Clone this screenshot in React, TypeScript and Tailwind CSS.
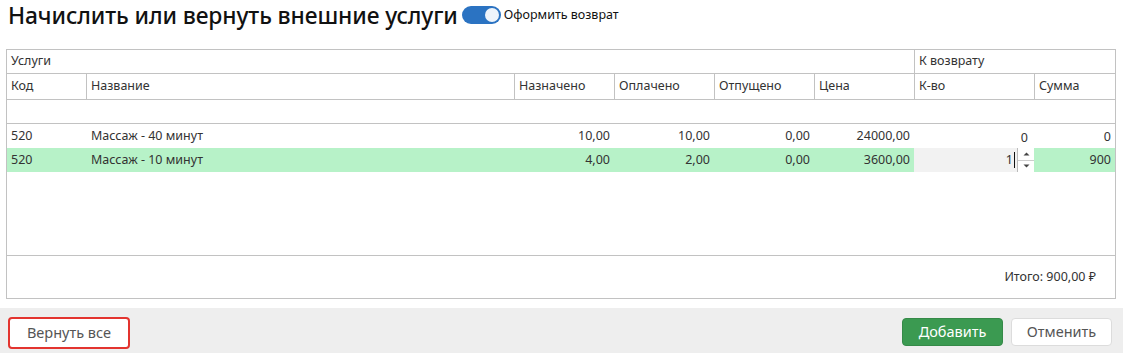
import React from "react";

const font = { fontFamily: '"Noto Sans", "Open Sans", sans-serif' };

function Cell({ children, className = "" }: { children?: React.ReactNode; className?: string }) {
  return <div className={`flex items-center px-[4px] ${className}`}>{children}</div>;
}

const cols = "grid grid-cols-[79px_428px_100px_100px_100px_100px_120px_81px]";

export default function App() {
  return (
    <div className="w-[1123px] h-[353px] bg-white text-[#333] overflow-hidden" style={font}>
      <div className="h-[49px] flex items-start pt-[1px] pl-[8px]">
        <h1 className="text-[22.8px] leading-[30px] font-medium text-[#111] tracking-[-0.1px]">Начислить или вернуть внешние услуги</h1>
        <div className="ml-[4px] mt-[5px] w-[39px] h-[18px] rounded-full bg-[#2b73c2] flex items-center justify-end pr-[2px]">
          <div className="w-[14px] h-[14px] rounded-full bg-[#eef4fb]" />
        </div>
        <span className="ml-[3px] mt-[6px] text-[12.5px] leading-[16px] text-[#111]">Оформить возврат</span>
      </div>
      <div className="ml-[6px] w-[1110px] h-[250px] border border-[#c2c2c2] flex flex-col text-[12.5px]">
        <div className={`${cols} h-[24px] border-b border-[#c2c2c2]`}>
          <Cell className="col-span-6">Услуги</Cell>
          <Cell className="col-span-2 border-l border-[#c2c2c2]">К возврату</Cell>
        </div>
        <div className={`${cols} h-[26px] border-b border-[#c2c2c2]`}>
          <Cell>Код</Cell>
          <Cell className="border-l border-[#c2c2c2]">Название</Cell>
          <Cell className="border-l border-[#c2c2c2]">Назначено</Cell>
          <Cell className="border-l border-[#c2c2c2]">Оплачено</Cell>
          <Cell className="border-l border-[#c2c2c2]">Отпущено</Cell>
          <Cell className="border-l border-[#c2c2c2]">Цена</Cell>
          <Cell className="border-l border-[#c2c2c2]">К-во</Cell>
          <Cell className="border-l border-[#c2c2c2]">Сумма</Cell>
        </div>
        <div className="h-[24px] border-b border-[#c2c2c2]" />
        <div className={`${cols} h-[24px]`}>
          <Cell>520</Cell>
          <Cell className="pl-[5px]">Массаж - 40 минут</Cell>
          <Cell className="justify-end">10,00</Cell>
          <Cell className="justify-end">10,00</Cell>
          <Cell className="justify-end">0,00</Cell>
          <Cell className="justify-end">24000,00</Cell>
          <Cell className="justify-end pr-[6px] pt-[4px]">0</Cell>
          <Cell className="justify-end pt-[2px]">0</Cell>
        </div>
        <div className={`${cols} h-[24px] bg-[#b7f2c8]`}>
          <Cell>520</Cell>
          <Cell className="pl-[5px]">Массаж - 10 минут</Cell>
          <Cell className="justify-end">4,00</Cell>
          <Cell className="justify-end">2,00</Cell>
          <Cell className="justify-end">0,00</Cell>
          <Cell className="justify-end">3600,00</Cell>
          <div className="flex bg-[#f2f2f2]">
            <div className="flex-1 flex items-center justify-end pr-[2px]">
              <span>1</span>
              <span className="ml-[1px] w-[1px] h-[16px] bg-[#111]" />
            </div>
            <div className="w-[17px] flex flex-col border-l border-[#bbb] bg-white">
              <div className="flex-1 flex items-center justify-center border-b border-[#ccc]">
                <svg width="7" height="4" viewBox="0 0 7 4"><path d="M3.5 0.5 L6.5 3.5 H0.5 Z" fill="#444" /></svg>
              </div>
              <div className="flex-1 flex items-center justify-center">
                <svg width="7" height="4" viewBox="0 0 7 4"><path d="M0.5 0.5 H6.5 L3.5 3.5 Z" fill="#444" /></svg>
              </div>
            </div>
          </div>
          <Cell className="justify-end">900</Cell>
        </div>
        <div className="flex-1 border-b border-[#c2c2c2]" />
        <div className="h-[42px] flex items-center justify-end pr-[19px] text-[12.5px]">Итого: 900,00 ₽</div>
      </div>
      <div className="mt-[9px] h-[45px] bg-[#eeeeee] flex items-start pt-[10px] px-[8px]">
        <button className="w-[122px] h-[32px] -mt-[1px] rounded-[4px] border-[2.5px] border-[#e3342f] bg-white text-[14.5px] text-[#555]">Вернуть все</button>
        <div className="ml-auto flex gap-[8px] pr-[3px]">
          <button className="w-[101px] h-[28px] rounded-[4px] bg-[#3b9a51] border border-[#358a48] text-white text-[14.5px]">Добавить</button>
          <button className="w-[101px] h-[28px] rounded-[4px] bg-white border border-[#dcdcdc] text-[#555] text-[14.5px]">Отменить</button>
        </div>
      </div>
    </div>
  );
}
